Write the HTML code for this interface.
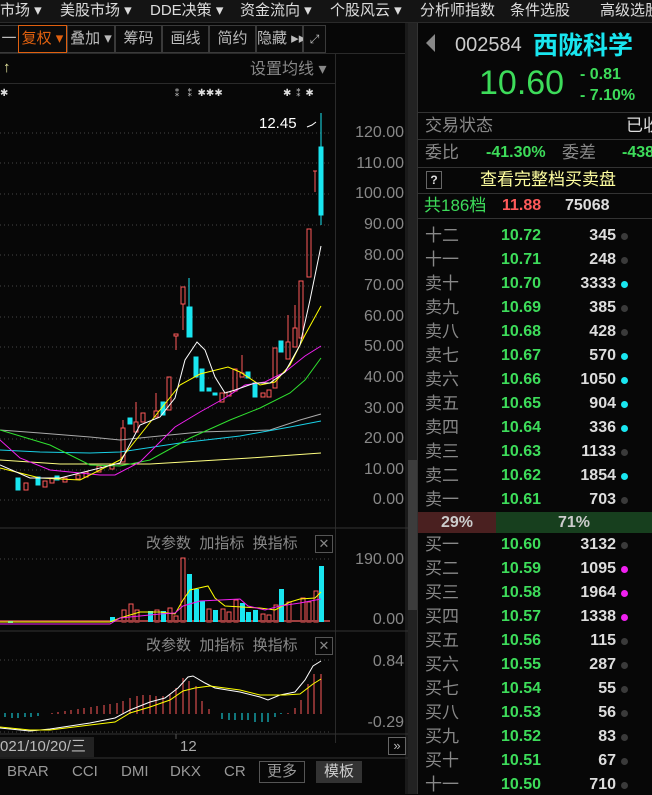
<!DOCTYPE html>
<html><head><meta charset="utf-8"><style>
*{margin:0;padding:0;box-sizing:border-box}
body{width:652px;height:794px;background:#070707;overflow:hidden;position:relative;font-family:"Liberation Sans","Noto Sans CJK SC",sans-serif;color:#ccc;line-height:20px}
.a{position:absolute;white-space:nowrap}
.nav{left:0;top:0;width:652px;height:23px;background:#141414;border-bottom:1px solid #2a2a2a;font-size:15px;color:#ddd}
.nav span{position:absolute;top:1px}
.tb{top:25px;height:28px;border:1px solid #3a3a3a;font-size:15px;color:#bbb;text-align:center;line-height:26px;background:#0b0b0b}
.lab{left:425px;color:#888;font-size:17px}
.pr{left:501px;color:#3ddc5a;font-weight:bold;font-size:16px}
.vol{width:116px;left:500px;text-align:right;color:#ddd;font-weight:bold;font-size:16px}
.dot{left:621px;width:7px;height:7px;border-radius:50%;background:#3a3a3a}
.ax{color:#888;font-size:16px;text-align:right}
.ctl{color:#888;font-size:15px}
svg{shape-rendering:crispEdges}
</style></head><body>
<div class="a nav">
<span style="left:0">市场 ▾</span><span style="left:60px">美股市场 ▾</span><span style="left:150px">DDE决策 ▾</span><span style="left:240px">资金流向 ▾</span><span style="left:330px">个股风云 ▾</span><span style="left:420px">分析师指数</span><span style="left:510px">条件选股</span><span style="left:600px">高级选股</span>
</div>
<div class="a tb" style="left:-2px;width:22px">一</div>
<div class="a tb" style="left:18px;width:49px;border-color:#e0600f;color:#e0600f">复权 ▾</div>
<div class="a tb" style="left:67px;width:48px">叠加 ▾</div>
<div class="a tb" style="left:115px;width:47px">筹码</div>
<div class="a tb" style="left:162px;width:47px">画线</div>
<div class="a tb" style="left:209px;width:47px">简约</div>
<div class="a tb" style="left:256px;width:47px">隐藏 ▸▸</div>
<div class="a tb" style="left:303px;width:23px;font-size:12px">⤢</div>
<div class="a" style="left:0;top:53px;width:408px;height:1px;background:#2a2a2a"></div>
<div class="a" style="left:3px;top:58px;color:#e8e8a0;font-size:15px">↑</div>
<div class="a ctl" style="left:250px;top:60px;font-size:16px">设置均线 ▾</div>
<div class="a" style="left:0;top:83px;width:335px;height:1px;background:#2a2a2a"></div>
<div class="a" style="left:0;top:84px;color:#ddd;font-size:10px">✱</div>
<div class="a" style="left:172px;top:84px;color:#ddd;font-size:10px">⁑ ⁑ ✱✱✱</div>
<div class="a" style="left:283px;top:84px;color:#ddd;font-size:10px;letter-spacing:2px">✱⁑✱</div>
<div class="a" style="left:259px;top:114px;color:#fff;font-size:15px">12.45</div>
<div class="a" style="left:335px;top:53px;width:1px;height:690px;background:#2a2a2a"></div>
<div class="a" style="left:405px;top:23px;width:3px;height:771px;background:#1a1a1a"></div>
<div class="a" style="left:408px;top:23px;width:9px;height:771px;background:#222"></div>
<div class="a" style="left:408px;top:460px;width:9px;height:150px;background:#3c3c3c"></div>
<div class="a" style="left:417px;top:23px;width:1px;height:771px;background:#333"></div>
<div class="a ax" style="top:123px;right:248px">120.00</div>
<div class="a ax" style="top:154px;right:248px">110.00</div>
<div class="a ax" style="top:184px;right:248px">100.00</div>
<div class="a ax" style="top:215px;right:248px">90.00</div>
<div class="a ax" style="top:246px;right:248px">80.00</div>
<div class="a ax" style="top:276px;right:248px">70.00</div>
<div class="a ax" style="top:307px;right:248px">60.00</div>
<div class="a ax" style="top:337px;right:248px">50.00</div>
<div class="a ax" style="top:368px;right:248px">40.00</div>
<div class="a ax" style="top:399px;right:248px">30.00</div>
<div class="a ax" style="top:429px;right:248px">20.00</div>
<div class="a ax" style="top:460px;right:248px">10.00</div>
<div class="a ax" style="top:490px;right:248px">0.00</div>
<div class="a ax" style="top:550px;right:248px">190.00</div>
<div class="a ax" style="top:610px;right:248px">0.00</div>
<div class="a ax" style="top:652px;right:248px">0.84</div>
<div class="a ax" style="top:713px;right:248px">-0.29</div>
<svg class="a" style="left:0;top:0" width="408" height="794">
<g stroke="#444" stroke-dasharray="1,3">
<line x1="0" y1="133" x2="330" y2="133"/><line x1="0" y1="163" x2="330" y2="163"/><line x1="0" y1="194" x2="330" y2="194"/><line x1="0" y1="225" x2="330" y2="225"/><line x1="0" y1="255" x2="330" y2="255"/><line x1="0" y1="286" x2="330" y2="286"/><line x1="0" y1="317" x2="330" y2="317"/><line x1="0" y1="347" x2="330" y2="347"/><line x1="0" y1="378" x2="330" y2="378"/><line x1="0" y1="408" x2="330" y2="408"/><line x1="0" y1="439" x2="330" y2="439"/><line x1="0" y1="470" x2="330" y2="470"/><line x1="0" y1="500" x2="330" y2="500"/>
<line x1="0" y1="559" x2="330" y2="559"/><line x1="0" y1="660" x2="330" y2="660"/><line x1="0" y1="732" x2="330" y2="732"/>
</g>
<line x1="0" y1="528" x2="408" y2="528" stroke="#333"/>
<line x1="0" y1="631" x2="408" y2="631" stroke="#333"/>
<line x1="0" y1="734" x2="408" y2="734" stroke="#333"/>
<line x1="0" y1="758" x2="408" y2="758" stroke="#333"/>
<g stroke="#ff5a5a" fill="none">
<rect x="24" y="483" width="4" height="7"/><rect x="43" y="481" width="4" height="6"/><rect x="50" y="478" width="4" height="5"/><rect x="63" y="478" width="4" height="4"/><rect x="76" y="475" width="4" height="4"/><rect x="84" y="472" width="4" height="5"/><rect x="97" y="466" width="4" height="6"/><rect x="110" y="464" width="4" height="5"/>
<rect x="121" y="428" width="4" height="34"/><line x1="123" y1="420" x2="123" y2="428"/>
<rect x="134" y="422" width="4" height="10"/><line x1="136" y1="402" x2="136" y2="422"/>
<rect x="141" y="413" width="4" height="9"/><rect x="154" y="411" width="4" height="6"/><line x1="156" y1="393" x2="156" y2="411"/>
<rect x="167" y="377" width="4" height="33"/><rect x="174" y="334" width="4" height="2"/><line x1="176" y1="336" x2="176" y2="350"/>
<rect x="181" y="287" width="4" height="17"/><line x1="183" y1="304" x2="183" y2="330"/>
<rect x="220" y="393" width="4" height="9"/><rect x="227" y="392" width="4" height="4"/><rect x="233" y="369" width="4" height="22"/><rect x="240" y="373" width="4" height="4"/><line x1="242" y1="355" x2="242" y2="373"/>
<rect x="261" y="393" width="4" height="4"/><rect x="267" y="390" width="4" height="7"/><rect x="273" y="348" width="4" height="40"/><rect x="286" y="342" width="4" height="17"/><line x1="288" y1="315" x2="288" y2="342"/>
<rect x="293" y="328" width="4" height="19"/><line x1="295" y1="305" x2="295" y2="328"/><rect x="299" y="281" width="4" height="57"/><rect x="307" y="229" width="4" height="48"/>
<line x1="313" y1="171" x2="317" y2="171"/><line x1="315" y1="171" x2="315" y2="192"/>
</g>
<g fill="#19e6f0" stroke="#19e6f0">
<rect x="16" y="478" width="4" height="12"/><rect x="36" y="477" width="4" height="8"/><rect x="55" y="476" width="4" height="4"/>
<rect x="128" y="418" width="4" height="6"/><rect x="161" y="402" width="4" height="13"/>
<rect x="187" y="307" width="5" height="30"/><line x1="189" y1="278" x2="189" y2="307"/>
<rect x="194" y="357" width="4" height="20"/><rect x="200" y="369" width="4" height="22"/><rect x="207" y="388" width="4" height="3"/><rect x="213" y="393" width="4" height="2"/>
<rect x="246" y="372" width="4" height="6"/><rect x="253" y="383" width="4" height="14"/><rect x="279" y="341" width="4" height="11"/>
<rect x="319" y="147" width="4" height="68"/><line x1="321" y1="113" x2="321" y2="225"/>
</g>
<g fill="none" stroke-width="1" style="shape-rendering:auto">
<polyline stroke="#fff" points="316,122 312,125 307,127"/>
<polyline stroke="#aaa" points="0,430 40,433 90,437 120,440 200,432 270,430 300,420 321,414"/>
<polyline stroke="#19d0e6" points="0,450 40,452 90,453 120,452 180,443 240,436 290,427 321,421"/>
<polyline stroke="#ffff80" points="0,460 60,464 150,464 250,458 321,453"/>
<polyline stroke="#30e030" points="0,430 50,445 90,465 120,466 150,460 190,438 230,420 260,408 290,393 305,380 321,358"/>
<polyline stroke="#f020f0" points="0,440 20,458 50,470 100,475 115,475 140,462 175,427 200,412 225,398 245,385 265,382 285,372 305,356 321,346"/>
<polyline stroke="#ffff00" points="0,468 40,478 80,480 120,460 160,410 180,385 200,374 228,367 240,372 260,385 275,382 290,365 305,335 321,306"/>
<polyline stroke="#fff" points="0,465 30,478 60,478 120,463 140,425 160,417 175,398 185,360 197,342 205,350 215,377 225,393 235,390 255,383 270,383 285,372 300,345 310,300 321,246"/>
</g>
<g stroke="#ff5a5a" fill="none">
<rect x="122" y="610" width="4" height="12"/><rect x="129" y="604" width="4" height="18"/><rect x="135" y="610" width="4" height="12"/><rect x="155" y="610" width="4" height="12"/><rect x="168" y="608" width="4" height="14"/><rect x="174" y="616" width="4" height="6"/><rect x="181" y="558" width="4" height="64"/><rect x="207" y="609" width="4" height="13"/><rect x="221" y="609" width="4" height="13"/><rect x="227" y="612" width="4" height="10"/><rect x="234" y="600" width="4" height="22"/><rect x="261" y="614" width="4" height="8"/><rect x="267" y="615" width="4" height="7"/><rect x="274" y="605" width="4" height="17"/><rect x="287" y="602" width="4" height="20"/><rect x="301" y="598" width="4" height="24"/><rect x="307" y="602" width="4" height="20"/><rect x="314" y="591" width="4" height="31"/>
</g>
<rect x="0" y="620" width="330" height="2" fill="#a04040"/>
<g fill="#19e6f0">
<rect x="148" y="611" width="5" height="11"/><rect x="161" y="611" width="5" height="11"/><rect x="187" y="574" width="5" height="48"/><rect x="194" y="589" width="5" height="33"/><rect x="200" y="601" width="5" height="21"/><rect x="213" y="610" width="5" height="12"/><rect x="240" y="603" width="5" height="19"/><rect x="246" y="612" width="5" height="10"/><rect x="253" y="610" width="5" height="12"/><rect x="279" y="589" width="5" height="33"/><rect x="319" y="566" width="5" height="56"/><rect x="8" y="621" width="5" height="2"/><rect x="110" y="617" width="5" height="5"/>
</g>
<g fill="none" style="shape-rendering:auto">
<polyline stroke="#ffff00" points="0,622 110,622 120,618 140,612 160,612 175,614 183,600 190,590 208,586 215,598 225,606 260,608 275,610 290,602 300,599 315,598 321,592"/>
<polyline stroke="#f020f0" points="0,624 110,624 120,618 160,614 175,613 183,606 200,601 240,599 248,606 265,610 280,606 300,603 321,599"/>
</g>
<g stroke="#ff5a5a"><line x1="52" y1="714" x2="52" y2="713"/><line x1="58" y1="714" x2="58" y2="712"/><line x1="65" y1="714" x2="65" y2="711"/><line x1="71" y1="714" x2="71" y2="710"/><line x1="78" y1="714" x2="78" y2="709"/><line x1="84" y1="714" x2="84" y2="708"/><line x1="91" y1="714" x2="91" y2="707"/><line x1="97" y1="714" x2="97" y2="706"/><line x1="104" y1="714" x2="104" y2="705"/><line x1="110" y1="714" x2="110" y2="704"/><line x1="117" y1="714" x2="117" y2="703"/><line x1="123" y1="714" x2="123" y2="701"/><line x1="130" y1="714" x2="130" y2="698"/><line x1="137" y1="714" x2="137" y2="696"/><line x1="143" y1="714" x2="143" y2="695"/><line x1="150" y1="714" x2="150" y2="695"/><line x1="156" y1="714" x2="156" y2="696"/><line x1="163" y1="714" x2="163" y2="696"/><line x1="170" y1="714" x2="170" y2="694"/><line x1="176" y1="714" x2="176" y2="688"/><line x1="183" y1="714" x2="183" y2="678"/><line x1="189" y1="714" x2="189" y2="681"/><line x1="196" y1="714" x2="196" y2="686"/><line x1="202" y1="714" x2="202" y2="701"/><line x1="209" y1="714" x2="209" y2="709"/><line x1="288" y1="714" x2="288" y2="713"/><line x1="295" y1="714" x2="295" y2="708"/><line x1="301" y1="714" x2="301" y2="700"/><line x1="308" y1="714" x2="308" y2="684"/><line x1="314" y1="714" x2="314" y2="674"/><line x1="321" y1="714" x2="321" y2="674"/></g>
<g stroke="#19e6f0"><line x1="5" y1="713" x2="5" y2="717"/><line x1="12" y1="713" x2="12" y2="718"/><line x1="18" y1="713" x2="18" y2="718"/><line x1="25" y1="713" x2="25" y2="717"/><line x1="31" y1="713" x2="31" y2="717"/><line x1="38" y1="713" x2="38" y2="716"/><line x1="222" y1="713" x2="222" y2="719"/><line x1="229" y1="713" x2="229" y2="720"/><line x1="235" y1="713" x2="235" y2="720"/><line x1="242" y1="713" x2="242" y2="720"/><line x1="248" y1="713" x2="248" y2="720"/><line x1="255" y1="713" x2="255" y2="722"/><line x1="262" y1="713" x2="262" y2="722"/><line x1="268" y1="713" x2="268" y2="722"/><line x1="275" y1="713" x2="275" y2="717"/><line x1="281" y1="713" x2="281" y2="714"/></g>
<g fill="none" style="shape-rendering:auto">
<polyline stroke="#fff" points="0,728 30,731 50,729 90,723 115,718 130,710 150,702 165,698 178,688 188,677 193,676 205,683 215,688 240,692 260,697 268,700 280,695 295,692 305,680 313,666 321,661"/>
<polyline stroke="#ffff00" points="0,727 30,730 50,730 90,725 115,722 130,713 150,707 170,700 183,691 195,688 210,686 240,690 260,695 285,695 300,694 313,684 321,679"/>
</g>
<line x1="176" y1="734" x2="176" y2="739" stroke="#555"/>
</svg>
<div class="a ctl" style="left:146px;top:534px">改参数&nbsp; 加指标&nbsp; 换指标</div>
<div class="a" style="left:315px;top:535px;width:18px;height:18px;border:1px solid #555;color:#888;font-size:13px;text-align:center;line-height:16px">✕</div>
<div class="a ctl" style="left:146px;top:636px">改参数&nbsp; 加指标&nbsp; 换指标</div>
<div class="a" style="left:315px;top:637px;width:18px;height:18px;border:1px solid #555;color:#888;font-size:13px;text-align:center;line-height:16px">✕</div>
<div class="a" style="left:0;top:737px;width:94px;height:20px;background:#222;color:#bbb;font-size:15px;line-height:20px">021/10/20/三</div>
<div class="a" style="left:180px;top:737px;color:#aaa;font-size:15px">12</div>
<div class="a" style="left:388px;top:737px;width:18px;height:18px;border:1px solid #666;color:#bbb;font-size:13px;text-align:center;line-height:16px">»</div>
<div class="a" style="left:7px;top:762px;color:#999;font-size:15px">BRAR</div>
<div class="a" style="left:72px;top:762px;color:#999;font-size:15px">CCI</div>
<div class="a" style="left:121px;top:762px;color:#999;font-size:15px">DMI</div>
<div class="a" style="left:170px;top:762px;color:#999;font-size:15px">DKX</div>
<div class="a" style="left:224px;top:762px;color:#999;font-size:15px">CR</div>
<div class="a" style="left:259px;top:761px;width:46px;height:22px;border:1px solid #555;color:#999;font-size:15px;text-align:center;line-height:20px">更多</div>
<div class="a" style="left:316px;top:761px;width:46px;height:22px;background:#333;color:#ccc;font-size:15px;text-align:center;line-height:22px">模板</div>
<!-- right panel -->
<div class="a" style="left:418px;top:23px;width:234px;height:771px;background:#070707"></div>
<div class="a" style="left:426px;top:34px;width:0;height:0;border-top:9px solid transparent;border-bottom:9px solid transparent;border-right:9px solid #888"></div>
<div class="a" style="left:455px;top:33px;color:#ccc;font-size:20px;line-height:24px">002584</div>
<div class="a" style="left:533px;top:31px;color:#19e6f0;font-size:25px;font-weight:bold;line-height:30px">西陇科学</div>
<div class="a" style="left:479px;top:64px;color:#3ddc5a;font-size:34px;line-height:38px">10.60</div>
<div class="a" style="left:580px;top:65px;color:#3ddc5a;font-size:16px;font-weight:bold">- 0.81</div>
<div class="a" style="left:580px;top:86px;color:#3ddc5a;font-size:16px;font-weight:bold">- 7.10%</div>
<div class="a" style="left:418px;top:112px;width:234px;height:1px;background:#333"></div>
<div class="a lab" style="top:116px">交易状态</div><div class="a" style="left:626px;top:116px;color:#ddd;font-size:17px">已收</div>
<div class="a" style="left:418px;top:139px;width:234px;height:1px;background:#333"></div>
<div class="a lab" style="top:143px">委比</div><div class="a" style="left:486px;top:143px;color:#3ddc5a;font-size:16px;font-weight:bold">-41.30%</div><div class="a" style="left:562px;top:143px;color:#888;font-size:17px">委差</div><div class="a" style="left:622px;top:143px;color:#3ddc5a;font-size:16px;font-weight:bold">-438</div>
<div class="a" style="left:418px;top:167px;width:234px;height:1px;background:#333"></div>
<div class="a" style="left:426px;top:171px;width:16px;height:18px;border:1px solid #666;color:#ddd;font-size:12px;text-align:center;line-height:16px;font-weight:bold">?</div>
<div class="a" style="left:480px;top:170px;color:#ffffa0;font-size:17px">查看完整档买卖盘</div>
<div class="a" style="left:418px;top:193px;width:234px;height:1px;background:#333"></div>
<div class="a" style="left:424px;top:196px;color:#3ddc5a;font-size:17px">共186档</div><div class="a" style="left:502px;top:196px;color:#ff5a5a;font-size:16px;font-weight:bold">11.88</div><div class="a" style="left:565px;top:196px;color:#ddd;font-size:16px;font-weight:bold">75068</div>
<div class="a" style="left:418px;top:218px;width:234px;height:1px;background:#333"></div>

<div class="a lab" style="top:226px">十二</div><div class="a pr" style="top:226px">10.72</div><div class="a vol" style="top:226px">345</div><div class="a dot" style="top:233px"></div>
<div class="a lab" style="top:250px">十一</div><div class="a pr" style="top:250px">10.71</div><div class="a vol" style="top:250px">248</div><div class="a dot" style="top:257px"></div>
<div class="a lab" style="top:274px">卖十</div><div class="a pr" style="top:274px">10.70</div><div class="a vol" style="top:274px">3333</div><div class="a dot" style="top:281px;background:#19e6f0"></div>
<div class="a lab" style="top:298px">卖九</div><div class="a pr" style="top:298px">10.69</div><div class="a vol" style="top:298px">385</div><div class="a dot" style="top:305px"></div>
<div class="a lab" style="top:322px">卖八</div><div class="a pr" style="top:322px">10.68</div><div class="a vol" style="top:322px">428</div><div class="a dot" style="top:329px"></div>
<div class="a lab" style="top:346px">卖七</div><div class="a pr" style="top:346px">10.67</div><div class="a vol" style="top:346px">570</div><div class="a dot" style="top:353px;background:#19e6f0"></div>
<div class="a lab" style="top:370px">卖六</div><div class="a pr" style="top:370px">10.66</div><div class="a vol" style="top:370px">1050</div><div class="a dot" style="top:377px;background:#19e6f0"></div>
<div class="a lab" style="top:394px">卖五</div><div class="a pr" style="top:394px">10.65</div><div class="a vol" style="top:394px">904</div><div class="a dot" style="top:401px;background:#19e6f0"></div>
<div class="a lab" style="top:418px">卖四</div><div class="a pr" style="top:418px">10.64</div><div class="a vol" style="top:418px">336</div><div class="a dot" style="top:425px;background:#19e6f0"></div>
<div class="a lab" style="top:442px">卖三</div><div class="a pr" style="top:442px">10.63</div><div class="a vol" style="top:442px">1133</div><div class="a dot" style="top:449px"></div>
<div class="a lab" style="top:466px">卖二</div><div class="a pr" style="top:466px">10.62</div><div class="a vol" style="top:466px">1854</div><div class="a dot" style="top:473px;background:#19e6f0"></div>
<div class="a lab" style="top:490px">卖一</div><div class="a pr" style="top:490px">10.61</div><div class="a vol" style="top:490px">703</div><div class="a dot" style="top:497px"></div>

<div class="a" style="left:418px;top:512px;width:78px;height:21px;background:#4a2020;color:#ccc;font-size:16px;font-weight:bold;text-align:center;line-height:21px">29%</div>
<div class="a" style="left:496px;top:512px;width:156px;height:21px;background:#173f1e;color:#ccc;font-size:16px;font-weight:bold;text-align:center;line-height:21px">71%</div>

<div class="a lab" style="top:535px">买一</div><div class="a pr" style="top:535px">10.60</div><div class="a vol" style="top:535px">3132</div><div class="a dot" style="top:542px"></div>
<div class="a lab" style="top:559px">买二</div><div class="a pr" style="top:559px">10.59</div><div class="a vol" style="top:559px">1095</div><div class="a dot" style="top:566px;background:#f020f0"></div>
<div class="a lab" style="top:583px">买三</div><div class="a pr" style="top:583px">10.58</div><div class="a vol" style="top:583px">1964</div><div class="a dot" style="top:590px;background:#f020f0"></div>
<div class="a lab" style="top:607px">买四</div><div class="a pr" style="top:607px">10.57</div><div class="a vol" style="top:607px">1338</div><div class="a dot" style="top:614px;background:#f020f0"></div>
<div class="a lab" style="top:631px">买五</div><div class="a pr" style="top:631px">10.56</div><div class="a vol" style="top:631px">115</div><div class="a dot" style="top:638px"></div>
<div class="a lab" style="top:655px">买六</div><div class="a pr" style="top:655px">10.55</div><div class="a vol" style="top:655px">287</div><div class="a dot" style="top:662px"></div>
<div class="a lab" style="top:679px">买七</div><div class="a pr" style="top:679px">10.54</div><div class="a vol" style="top:679px">55</div><div class="a dot" style="top:686px"></div>
<div class="a lab" style="top:703px">买八</div><div class="a pr" style="top:703px">10.53</div><div class="a vol" style="top:703px">56</div><div class="a dot" style="top:710px"></div>
<div class="a lab" style="top:727px">买九</div><div class="a pr" style="top:727px">10.52</div><div class="a vol" style="top:727px">83</div><div class="a dot" style="top:734px"></div>
<div class="a lab" style="top:751px">买十</div><div class="a pr" style="top:751px">10.51</div><div class="a vol" style="top:751px">67</div><div class="a dot" style="top:758px"></div>
<div class="a lab" style="top:775px">十一</div><div class="a pr" style="top:775px">10.50</div><div class="a vol" style="top:775px">710</div><div class="a dot" style="top:782px"></div>
</body></html>
